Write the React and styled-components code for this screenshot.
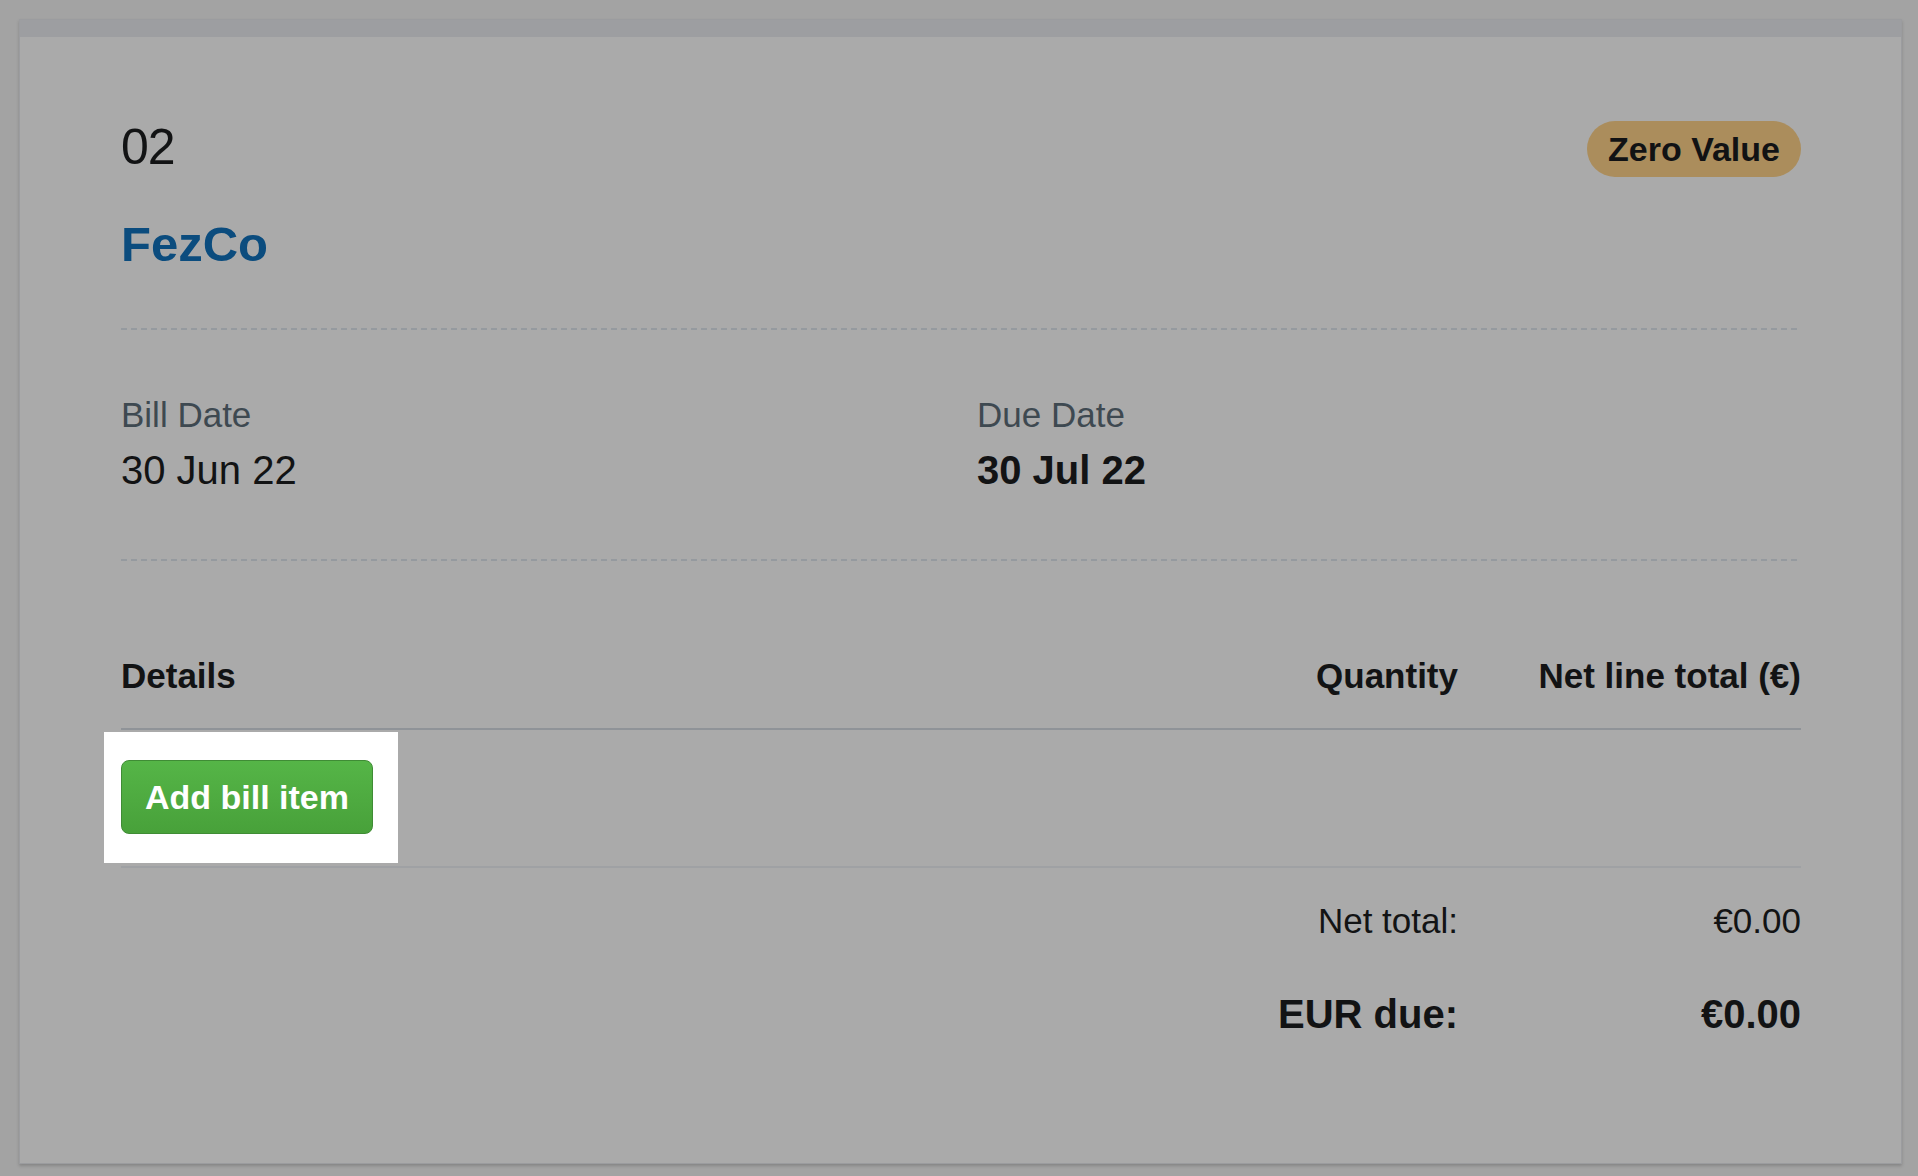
import React from "react";
import styled, { createGlobalStyle } from "styled-components";

const GlobalStyle = createGlobalStyle`
  body {
    margin: 0;
    background: #a3a3a3;
    font-family: "Liberation Sans", Arial, Helvetica, sans-serif;
    color: #121314;
  }
`;

const Card = styled.div`
  margin: 19px 16px 19px 19px;
  background: #aaaaaa;
  border: 1px solid #9b9c9f;
  box-shadow: 0 2px 3px rgba(0, 0, 0, 0.18);
`;

const TopStrip = styled.div`
  height: 17px;
  background: #9d9ea1;
`;

const Body = styled.div`
  padding: 85px 100px 129px 101px;
`;

const HeaderRow = styled.div`
  display: flex;
  justify-content: space-between;
  align-items: flex-start;
`;

const BillNumber = styled.div`
  font-size: 50px;
  line-height: 50px;
  letter-spacing: -1px;
`;

const Badge = styled.span`
  display: inline-flex;
  align-items: center;
  height: 56px;
  margin-top: -1px;
  padding: 0 21px;
  border-radius: 28px;
  background: #ab8d5c;
  font-size: 34px;
  font-weight: 700;
  color: #111214;
`;

const Supplier = styled.div`
  margin-top: 43px;
  font-size: 49px;
  line-height: 49px;
  font-weight: 700;
  color: #0b4c7e;
`;

const Dashed = styled.div`
  height: 2px;
  margin-top: ${(p) => p.top}px;
  background: repeating-linear-gradient(
    to right,
    #959a9f 0 6px,
    transparent 6px 10px
  );
`;

const DateGrid = styled.div`
  display: grid;
  grid-template-columns: 1fr 1fr;
  column-gap: 32px;
  padding-top: 67px;
`;

const DateBlock = styled.div`
  display: flex;
  flex-direction: column;
  gap: 18px;
`;

const Label = styled.div`
  font-size: 35px;
  line-height: 35px;
  color: #3e4951;
`;

const DateValue = styled.div`
  font-size: 40px;
  line-height: 40px;
  font-weight: ${(p) => (p.bold ? 700 : 400)};
`;

const Table = styled.div`
  margin-top: 97px;
`;

const Row = styled.div`
  display: grid;
  grid-template-columns: 1fr 200px 343px;
  align-items: center;
`;

const HeadRow = styled(Row)`
  padding-bottom: 35px;
  border-bottom: 2px solid #8f9398;
`;

const HeadCell = styled.div`
  font-size: 35px;
  line-height: 35px;
  font-weight: 700;
  text-align: ${(p) => p.align || "left"};
`;

const ItemRow = styled.div`
  padding: 2px 0 3px;
  border-bottom: 2px solid #9fa1a4;
`;

const Spotlight = styled.div`
  display: inline-flex;
  margin-left: -17px;
  padding: 28px 25px 29px 17px;
  background: #ffffff;
`;

const AddButton = styled.button`
  width: 252px;
  height: 74px;
  padding: 0;
  border: 1px solid #3f8c35;
  border-radius: 8px;
  background: linear-gradient(#55b547, #48a13a);
  color: #ffffff;
  font-family: "Liberation Sans", Arial, sans-serif;
  font-size: 34px;
  font-weight: 700;
  cursor: pointer;
`;

const Totals = styled.div`
  padding-top: 35px;
  display: flex;
  flex-direction: column;
  gap: ${(p) => p.gap}px;
`;

const TotalCell = styled.div`
  grid-column: ${(p) => p.col};
  text-align: right;
  font-size: ${(p) => (p.strong ? 40 : 35)}px;
  line-height: ${(p) => (p.strong ? 40 : 35)}px;
  font-weight: ${(p) => (p.strong ? 700 : 400)};
`;

export default function App() {
  return (
    <>
      <GlobalStyle />
      <Card>
        <TopStrip />
        <Body>
          <HeaderRow>
            <BillNumber>02</BillNumber>
            <Badge>Zero Value</Badge>
          </HeaderRow>
          <Supplier>FezCo</Supplier>
          <Dashed top={59} />
          <DateGrid>
            <DateBlock>
              <Label>Bill Date</Label>
              <DateValue>30 Jun 22</DateValue>
            </DateBlock>
            <DateBlock>
              <Label>Due Date</Label>
              <DateValue bold>30 Jul 22</DateValue>
            </DateBlock>
          </DateGrid>
          <Dashed top={69} />
          <Table>
            <HeadRow>
              <HeadCell>Details</HeadCell>
              <HeadCell align="right">Quantity</HeadCell>
              <HeadCell align="right">Net line total (€)</HeadCell>
            </HeadRow>
            <ItemRow>
              <Spotlight>
                <AddButton>Add bill item</AddButton>
              </Spotlight>
            </ItemRow>
            <Totals gap={56}>
              <Row>
                <TotalCell col={2}>Net total:</TotalCell>
                <TotalCell col={3}>€0.00</TotalCell>
              </Row>
              <Row>
                <TotalCell col={2} strong>
                  EUR due:
                </TotalCell>
                <TotalCell col={3} strong>
                  €0.00
                </TotalCell>
              </Row>
            </Totals>
          </Table>
        </Body>
      </Card>
    </>
  );
}
